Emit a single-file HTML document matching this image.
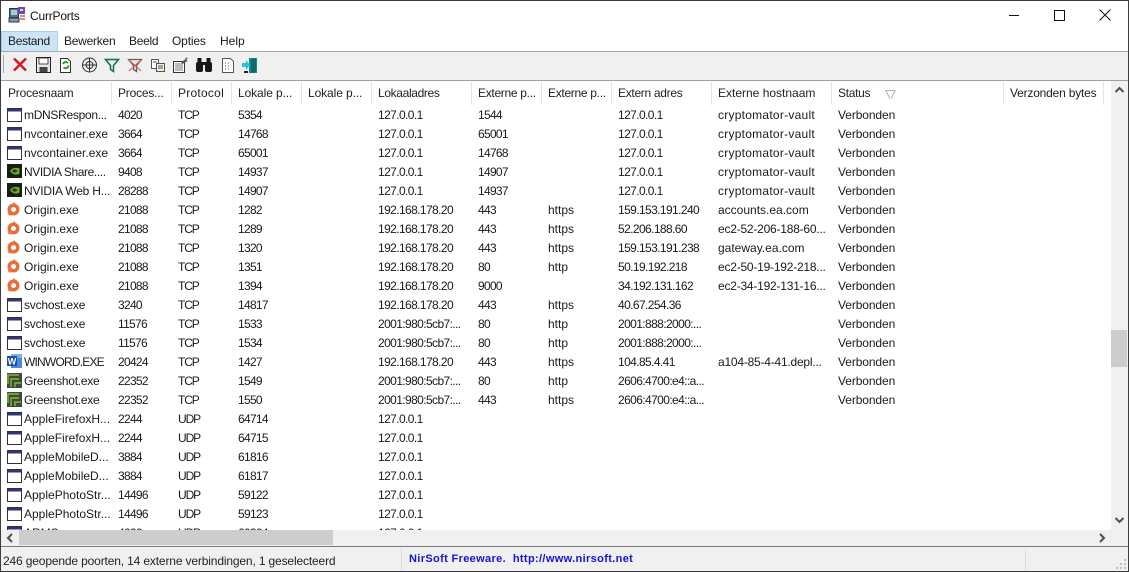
<!DOCTYPE html>
<html><head><meta charset="utf-8"><title>CurrPorts</title>
<style>
html,body{margin:0;padding:0;width:1129px;height:572px;overflow:hidden;background:#fff}
body{font:12px "Liberation Sans",sans-serif;color:#1a1a1a;position:relative}
.a{position:absolute}
.t{position:absolute;white-space:nowrap;line-height:16px}
#list{position:absolute;left:1px;top:105px;width:1110px;height:425px;overflow:hidden}
.r{position:absolute;left:0;width:1110px;height:19px}
.r span{position:absolute;top:2px;line-height:16px;white-space:nowrap}
.r svg{position:absolute;left:5px;top:1px;width:17px;height:17px}
.n{left:23px}
.p{left:117px;letter-spacing:-.7px}
.o{left:177px;letter-spacing:-1.1px}
.l{left:237px;letter-spacing:-.7px}
.d{left:377px;letter-spacing:-.6px}
.e{left:477px;letter-spacing:-.7px}
.s{left:547px}
.x{left:617px;letter-spacing:-.6px}
.h{left:717px}
.v{left:837px;letter-spacing:-.1px}
.c{letter-spacing:.25px}
.g{letter-spacing:-.22px}
.m{position:absolute;top:32px;height:19px;line-height:18px;text-align:center}
.hs{position:absolute;top:82px;width:1px;height:23px;background:#e5e5e5}
.hd{position:absolute;top:85px;line-height:16px;white-space:nowrap;color:#222}
</style></head><body>
<svg width="0" height="0" style="position:absolute"><defs>
<symbol id="w" viewBox="0 0 17 17"><rect x="1.500" y="2.500" width="14" height="13" fill="#fff" stroke="#333"/><rect x="2" y="3" width="13" height="2.500" fill="#2a3680"/></symbol>
<symbol id="nv" viewBox="0 0 17 17"><rect x="1" y="1" width="15" height="14" fill="#1a1d16"/><path d="M4 8C6 4.700 10 4.200 13.500 5.500v5C10.500 12.500 6.500 11.800 4 8z" fill="#6fa92a"/><ellipse cx="8.700" cy="8" rx="2.500" ry="1.600" fill="#2c3818"/></symbol>
<symbol id="or" viewBox="0 0 17 17"><circle cx="7.500" cy="8.500" r="6" fill="#e56f38"/><path d="M8 1l2.500 3-4 0z" fill="#e56f38"/><path d="M1.500 11l1 3 3 1z" fill="#e56f38"/><circle cx="7.500" cy="8.500" r="2.500" fill="#fff"/></symbol>
<symbol id="wd" viewBox="0 0 17 17"><rect x="5" y="1" width="11" height="14" fill="#4a8ad8"/><rect x="5" y="1" width="11" height="4" fill="#7ab0ec"/><rect x="1" y="3" width="10" height="10" fill="#1d4f9e"/><text x="6" y="11.500" font-size="9" font-weight="bold" fill="#fff" text-anchor="middle" font-family="Liberation Sans">W</text></symbol>
<symbol id="gs" viewBox="0 0 17 17"><rect x="1" y="1" width="15" height="15" fill="#3f4a3a"/><path d="M2 12V3h11M5 15V7h8M9 15v-4h6" fill="none" stroke="#74ab38" stroke-width="1.700"/></symbol>
</defs></svg>

<!-- title bar -->
<svg class="a" style="left:8px;top:6px" width="18" height="18" viewBox="0 0 18 18"><rect x="1.500" y="2.500" width="9" height="9" fill="#54748a" stroke="#2a3a4a"/><rect x="3" y="4" width="6" height="5" fill="#a8ccd8"/><rect x="10" y="1" width="7" height="7" fill="#6a4aaa"/><rect x="12" y="3" width="3" height="2" fill="#e0d8f0"/><rect x="1" y="12" width="10" height="4" fill="#8a98a4" stroke="#2a3a4a"/><path d="M12 10h5M12 13h5" stroke="#c84040" stroke-width="1.300"/></svg>
<div class="t" style="left:30px;top:8px;color:#111;letter-spacing:-.2px">CurrPorts</div>
<div class="a" style="left:1009px;top:15px;width:10px;height:1px;background:#111"></div>
<div class="a" style="left:1054px;top:10px;width:9px;height:9px;border:1px solid #111"></div>
<svg class="a" style="left:1099px;top:9px" width="12" height="12" viewBox="0 0 12 12"><path d="M.5.5l11 11M11.500.5l-11 11" stroke="#111" fill="none"/></svg>

<!-- menu -->
<div class="a" style="left:1px;top:31px;width:55px;height:19px;background:#cce4f7;border:1px solid #a5cdec"></div>
<div class="m" style="left:8px;letter-spacing:-.3px">Bestand</div>
<div class="m" style="left:64px;letter-spacing:-.25px">Bewerken</div>
<div class="m" style="left:129px;letter-spacing:-.3px">Beeld</div>
<div class="m" style="left:172px;letter-spacing:-.15px">Opties</div>
<div class="m" style="left:220px">Help</div>

<!-- toolbar -->
<div class="a" style="left:1px;top:51px;width:1127px;height:1px;background:#a9a9a9"></div>
<div class="a" style="left:1px;top:52px;width:1127px;height:28px;background:#f0f0f0"></div>
<div class="a" style="left:1px;top:80px;width:1127px;height:1px;background:#a0a0a0"></div>
<div class="a" style="left:3px;top:55px;width:1px;height:18px;background:#a8a8a8"></div>
<svg class="a" style="left:0;top:52px" width="270" height="28" viewBox="0 0 270 28">
<path d="M14 6.500l12 12M26 6.500L14 18.500" stroke="#d8181f" stroke-width="2.500" fill="none"/>
<g><rect x="36.500" y="5.500" width="14" height="15" fill="#e8e8e8" stroke="#222"/><rect x="39" y="6" width="9" height="6" fill="#fff" stroke="#222" stroke-width=".8"/><rect x="39.500" y="15" width="8" height="5" fill="#444"/></g>
<g><path d="M60.500 6.500h7l3 3v11h-10z" fill="#fff" stroke="#333"/><path d="M63 12a3 3 0 0 1 5-1M68.500 13.500a3 3 0 0 1-5 2" stroke="#0e9a20" stroke-width="1.800" fill="none"/></g>
<g fill="none" stroke="#333"><circle cx="89.500" cy="13" r="7"/><circle cx="89.500" cy="13" r="3.500"/><path d="M82 13h15M89.500 5.500v15"/></g>
<path d="M105.500 7.500h13l-5 6v6l-3-2v-4z" fill="#e4f2ee" stroke="#106a60" stroke-width="1.500"/>
<path d="M128.500 7.500h13l-5 6v6l-3-2v-4z" fill="#ece8e8" stroke="#56625a" stroke-width="1.300"/><path d="M129 8l12 11M141 8l-12 11" stroke="#e05050"/>
<g fill="#fff" stroke="#555"><rect x="151.500" y="7.500" width="7" height="9"/><rect x="156.500" y="11.500" width="8" height="8" fill="#f4efd8"/><path d="M158 14h5M158 16h5M153 10h4" fill="none"/></g>
<g><rect x="173.500" y="9.500" width="11" height="11" fill="#fff" stroke="#333"/><path d="M175 12h8M175 14h8M175 16h8M175 18h8" stroke="#777"/><path d="M181 10l5-3 1.500 2-5 3z" fill="#555"/><path d="M185.500 6.500l2 0" stroke="#2060d0" stroke-width="1.600"/></g>
<g fill="#161616"><rect x="196" y="10" width="7" height="10" rx="2"/><rect x="205" y="10" width="7" height="10" rx="2"/><rect x="197.500" y="6" width="4" height="5"/><rect x="206.500" y="6" width="4" height="5"/><rect x="202" y="10" width="4" height="3"/></g>
<g><path d="M222.500 6.500h8l3 3v11h-11z" fill="#fff" stroke="#555"/><path d="M225 11h1M228 11h1M225 14h1M228 14h1M225 17h1M228 17h1" stroke="#555"/></g>
<g><path d="M249 6h8v15h-8z" fill="#138a92"/><path d="M251 7l5-1v14l-5 1z" fill="#0f6a70"/><path d="M242 11h4V8l4 5-4 5v-3h-4z" fill="#28c4dc"/><rect x="244" y="19" width="4" height="2" fill="#222"/></g>
</svg>

<!-- header -->
<div class="hd" style="left:8px;letter-spacing:-.2px">Procesnaam</div>
<div class="hd" style="left:118px;letter-spacing:-.2px">Proces...</div>
<div class="hd" style="left:178px;letter-spacing:.25px">Protocol</div>
<div class="hd" style="left:238px;letter-spacing:-.1px">Lokale p...</div>
<div class="hd" style="left:308px;letter-spacing:-.1px">Lokale p...</div>
<div class="hd" style="left:378px;letter-spacing:-.35px">Lokaaladres</div>
<div class="hd" style="left:478px;letter-spacing:-.3px">Externe p...</div>
<div class="hd" style="left:548px;letter-spacing:-.3px">Externe p...</div>
<div class="hd" style="left:618px;letter-spacing:-.3px">Extern adres</div>
<div class="hd" style="left:718px">Externe hostnaam</div>
<div class="hd" style="left:838px;letter-spacing:-.3px">Status</div>
<div class="hd" style="left:1010px;letter-spacing:-.2px">Verzonden bytes</div>
<svg class="a" style="left:885px;top:90px" width="11" height="9" viewBox="0 0 11 9"><path d="M0 .5h10.500M1 1l4 7.500M10 1L6 8.500" fill="none" stroke="#b0b0b0"/></svg>
<div class="hs" style="left:111px"></div><div class="hs" style="left:171px"></div><div class="hs" style="left:231px"></div><div class="hs" style="left:301px"></div><div class="hs" style="left:371px"></div><div class="hs" style="left:471px"></div><div class="hs" style="left:541px"></div><div class="hs" style="left:611px"></div><div class="hs" style="left:711px"></div><div class="hs" style="left:831px"></div><div class="hs" style="left:1003px"></div><div class="hs" style="left:1103px"></div>

<!-- rows -->
<div id="list">
<div class="r" style="top:0"><svg><use href="#w"/></svg><span class="n" style="letter-spacing:-.3px">mDNSRespon...</span><span class="p">4020</span><span class="o">TCP</span><span class="l">5354</span><span class="d">127.0.0.1</span><span class="e">1544</span><span class="x">127.0.0.1</span><span class="h c">cryptomator-vault</span><span class="v">Verbonden</span></div>
<div class="r" style="top:19px"><svg><use href="#w"/></svg><span class="n">nvcontainer.exe</span><span class="p">3664</span><span class="o">TCP</span><span class="l">14768</span><span class="d">127.0.0.1</span><span class="e">65001</span><span class="x">127.0.0.1</span><span class="h c">cryptomator-vault</span><span class="v">Verbonden</span></div>
<div class="r" style="top:38px"><svg><use href="#w"/></svg><span class="n">nvcontainer.exe</span><span class="p">3664</span><span class="o">TCP</span><span class="l">65001</span><span class="d">127.0.0.1</span><span class="e">14768</span><span class="x">127.0.0.1</span><span class="h c">cryptomator-vault</span><span class="v">Verbonden</span></div>
<div class="r" style="top:57px"><svg><use href="#nv"/></svg><span class="n" style="letter-spacing:-.4px">NVIDIA Share....</span><span class="p">9408</span><span class="o">TCP</span><span class="l">14937</span><span class="d">127.0.0.1</span><span class="e">14907</span><span class="x">127.0.0.1</span><span class="h c">cryptomator-vault</span><span class="v">Verbonden</span></div>
<div class="r" style="top:76px"><svg><use href="#nv"/></svg><span class="n" style="letter-spacing:-.2px">NVIDIA Web H...</span><span class="p">28288</span><span class="o">TCP</span><span class="l">14907</span><span class="d">127.0.0.1</span><span class="e">14937</span><span class="x">127.0.0.1</span><span class="h c">cryptomator-vault</span><span class="v">Verbonden</span></div>
<div class="r" style="top:95px"><svg><use href="#or"/></svg><span class="n">Origin.exe</span><span class="p">21088</span><span class="o">TCP</span><span class="l">1282</span><span class="d">192.168.178.20</span><span class="e">443</span><span class="s">https</span><span class="x">159.153.191.240</span><span class="h">accounts.ea.com</span><span class="v">Verbonden</span></div>
<div class="r" style="top:114px"><svg><use href="#or"/></svg><span class="n">Origin.exe</span><span class="p">21088</span><span class="o">TCP</span><span class="l">1289</span><span class="d">192.168.178.20</span><span class="e">443</span><span class="s">https</span><span class="x">52.206.188.60</span><span class="h g">ec2-52-206-188-60...</span><span class="v">Verbonden</span></div>
<div class="r" style="top:133px"><svg><use href="#or"/></svg><span class="n">Origin.exe</span><span class="p">21088</span><span class="o">TCP</span><span class="l">1320</span><span class="d">192.168.178.20</span><span class="e">443</span><span class="s">https</span><span class="x">159.153.191.238</span><span class="h">gateway.ea.com</span><span class="v">Verbonden</span></div>
<div class="r" style="top:152px"><svg><use href="#or"/></svg><span class="n">Origin.exe</span><span class="p">21088</span><span class="o">TCP</span><span class="l">1351</span><span class="d">192.168.178.20</span><span class="e">80</span><span class="s">http</span><span class="x">50.19.192.218</span><span class="h g">ec2-50-19-192-218...</span><span class="v">Verbonden</span></div>
<div class="r" style="top:171px"><svg><use href="#or"/></svg><span class="n">Origin.exe</span><span class="p">21088</span><span class="o">TCP</span><span class="l">1394</span><span class="d">192.168.178.20</span><span class="e">9000</span><span class="x">34.192.131.162</span><span class="h g">ec2-34-192-131-16...</span><span class="v">Verbonden</span></div>
<div class="r" style="top:190px"><svg><use href="#w"/></svg><span class="n" style="letter-spacing:-.2px">svchost.exe</span><span class="p">3240</span><span class="o">TCP</span><span class="l">14817</span><span class="d">192.168.178.20</span><span class="e">443</span><span class="s">https</span><span class="x">40.67.254.36</span><span class="v">Verbonden</span></div>
<div class="r" style="top:209px"><svg><use href="#w"/></svg><span class="n" style="letter-spacing:-.2px">svchost.exe</span><span class="p">11576</span><span class="o">TCP</span><span class="l">1533</span><span class="d">2001:980:5cb7:...</span><span class="e">80</span><span class="s">http</span><span class="x">2001:888:2000:...</span><span class="v">Verbonden</span></div>
<div class="r" style="top:228px"><svg><use href="#w"/></svg><span class="n" style="letter-spacing:-.2px">svchost.exe</span><span class="p">11576</span><span class="o">TCP</span><span class="l">1534</span><span class="d">2001:980:5cb7:...</span><span class="e">80</span><span class="s">http</span><span class="x">2001:888:2000:...</span><span class="v">Verbonden</span></div>
<div class="r" style="top:247px"><svg><use href="#wd"/></svg><span class="n" style="letter-spacing:-.8px">WINWORD.EXE</span><span class="p">20424</span><span class="o">TCP</span><span class="l">1427</span><span class="d">192.168.178.20</span><span class="e">443</span><span class="s">https</span><span class="x">104.85.4.41</span><span class="h g">a104-85-4-41.depl...</span><span class="v">Verbonden</span></div>
<div class="r" style="top:266px"><svg><use href="#gs"/></svg><span class="n" style="letter-spacing:-.25px">Greenshot.exe</span><span class="p">22352</span><span class="o">TCP</span><span class="l">1549</span><span class="d">2001:980:5cb7:...</span><span class="e">80</span><span class="s">http</span><span class="x">2606:4700:e4::a...</span><span class="v">Verbonden</span></div>
<div class="r" style="top:285px"><svg><use href="#gs"/></svg><span class="n" style="letter-spacing:-.25px">Greenshot.exe</span><span class="p">22352</span><span class="o">TCP</span><span class="l">1550</span><span class="d">2001:980:5cb7:...</span><span class="e">443</span><span class="s">https</span><span class="x">2606:4700:e4::a...</span><span class="v">Verbonden</span></div>
<div class="r" style="top:304px"><svg><use href="#w"/></svg><span class="n">AppleFirefoxH...</span><span class="p">2244</span><span class="o">UDP</span><span class="l">64714</span><span class="d">127.0.0.1</span></div>
<div class="r" style="top:323px"><svg><use href="#w"/></svg><span class="n">AppleFirefoxH...</span><span class="p">2244</span><span class="o">UDP</span><span class="l">64715</span><span class="d">127.0.0.1</span></div>
<div class="r" style="top:342px"><svg><use href="#w"/></svg><span class="n">AppleMobileD...</span><span class="p">3884</span><span class="o">UDP</span><span class="l">61816</span><span class="d">127.0.0.1</span></div>
<div class="r" style="top:361px"><svg><use href="#w"/></svg><span class="n">AppleMobileD...</span><span class="p">3884</span><span class="o">UDP</span><span class="l">61817</span><span class="d">127.0.0.1</span></div>
<div class="r" style="top:380px"><svg><use href="#w"/></svg><span class="n">ApplePhotoStr...</span><span class="p">14496</span><span class="o">UDP</span><span class="l">59122</span><span class="d">127.0.0.1</span></div>
<div class="r" style="top:399px"><svg><use href="#w"/></svg><span class="n">ApplePhotoStr...</span><span class="p">14496</span><span class="o">UDP</span><span class="l">59123</span><span class="d">127.0.0.1</span></div>
<div class="r" style="top:418px"><svg><use href="#w"/></svg><span class="n">ARMSvc.exe</span><span class="p">4000</span><span class="o">UDP</span><span class="l">60304</span><span class="d">127.0.0.1</span></div>
</div>

<!-- vertical scrollbar -->
<div class="a" style="left:1111px;top:81px;width:17px;height:449px;background:#f0f0f0"></div>
<div class="a" style="left:1111px;top:330px;width:16px;height:37px;background:#cdcdcd"></div>
<svg class="a" style="left:1111px;top:82px" width="17" height="17" viewBox="0 0 17 17"><path d="M4.500 10L8.500 6l4 4" fill="none" stroke="#505050" stroke-width="2"/></svg>
<svg class="a" style="left:1111px;top:512px" width="17" height="17" viewBox="0 0 17 17"><path d="M4.500 6l4 4 4-4" fill="none" stroke="#505050" stroke-width="2"/></svg>

<!-- horizontal scrollbar -->
<div class="a" style="left:1px;top:530px;width:1127px;height:16px;background:#f0f0f0"></div>
<div class="a" style="left:19px;top:530px;width:314px;height:15px;background:#cdcdcd"></div>
<svg class="a" style="left:1px;top:530px" width="18" height="16" viewBox="0 0 18 16"><path d="M11 4L7 8l4 4" fill="none" stroke="#505050" stroke-width="2"/></svg>
<svg class="a" style="left:1093px;top:530px" width="18" height="16" viewBox="0 0 18 16"><path d="M7 4l4 4-4 4" fill="none" stroke="#505050" stroke-width="2"/></svg>

<!-- status bar -->
<div class="a" style="left:1px;top:546px;width:1127px;height:1px;background:#7a7a7a"></div>
<div class="a" style="left:1px;top:547px;width:1127px;height:24px;background:#f0f0f0"></div>
<div class="t" style="left:3px;top:553px;color:#222;letter-spacing:-.15px">246 geopende poorten, 14 externe verbindingen, 1 geselecteerd</div>
<div class="a" style="left:401px;top:548px;width:1px;height:23px;background:#dcdcdc"></div>
<div class="a" style="left:1025px;top:550px;width:1px;height:21px;background:#dcdcdc"></div>
<div class="t" style="left:409px;top:551px;color:#1414d8;font-weight:bold;font-size:11px;letter-spacing:.35px;white-space:pre">NirSoft Freeware.  http://www.nirsoft.net</div>
<svg class="a" style="left:1116px;top:559px" width="11" height="11" viewBox="0 0 11 11" fill="#bdbdbd"><rect x="8" y="0" width="2" height="2"/><rect x="4" y="4" width="2" height="2"/><rect x="8" y="4" width="2" height="2"/><rect x="0" y="8" width="2" height="2"/><rect x="4" y="8" width="2" height="2"/><rect x="8" y="8" width="2" height="2"/></svg>

<!-- window border -->
<div class="a" style="left:0;top:0;width:1127px;height:570px;border:1px solid #3c3c3c;pointer-events:none"></div>
</body></html>
